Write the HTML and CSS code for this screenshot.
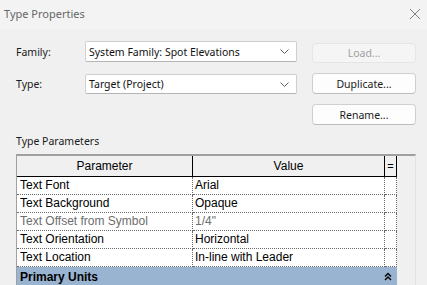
FILE: index.html
```html
<!DOCTYPE html>
<html>
<head>
<meta charset="utf-8">
<link rel="stylesheet" href="styles.css">
</head>
<body>
<div class="titlebar">
  <span class="title">Type Properties</span>
  <svg class="close" width="12" height="12" viewBox="0 0 12 12"><path d="M1 1L11 11M11 1L1 11" stroke="#808080" stroke-width="1" fill="none"/></svg>
</div>
<div class="content">
  <div class="form">
    <label class="lbl">Family:</label>
    <div class="combo c1"><span>System Family: Spot Elevations</span><svg width="9" height="5" viewBox="0 0 9 5"><path d="M0.5 0.5L4.5 4.5L8.5 0.5" stroke="#606060" fill="none"/></svg></div>
    <button class="btn disabled b1">Load...</button>
    <label class="lbl">Type:</label>
    <div class="combo c2"><span>Target (Project)</span><svg width="9" height="5" viewBox="0 0 9 5"><path d="M0.5 0.5L4.5 4.5L8.5 0.5" stroke="#606060" fill="none"/></svg></div>
    <button class="btn">Duplicate...</button>
    <span></span><span></span>
    <button class="btn">Rename...</button>
  </div>
  <div class="section">Type Parameters</div>
  <div class="frame">
    <div class="ptable">
      <div class="hc">Parameter</div><div class="hc">Value</div><div class="hc eq">=</div>
      <div class="bc">Text Font</div><div class="bc v">Arial</div><div class="bc"></div>
      <div class="bc">Text Background</div><div class="bc v">Opaque</div><div class="bc"></div>
      <div class="bc dis">Text Offset from Symbol</div><div class="bc v dis">1/4"</div><div class="bc"></div>
      <div class="bc">Text Orientation</div><div class="bc v">Horizontal</div><div class="bc"></div>
      <div class="bc">Text Location</div><div class="bc v">In-line with Leader</div><div class="bc"></div>
      <div class="group"><span>Primary Units</span><svg width="8" height="9" viewBox="0 0 8 9"><path d="M1 4.5L4 1.5L7 4.5M1 8L4 5L7 8" stroke="#000" stroke-width="1.4" fill="none"/></svg></div>
    </div>
    <div class="track"></div>
  </div>
</div>
</body>
</html>
```
FILE: styles.css
```css
html, body {
  margin: 0;
  padding: 0;
}
body {
  width: 427px;
  height: 285px;
  overflow: hidden;
  background: #f0f0f0;
  font-family: "Noto Sans", "Open Sans", sans-serif;
  font-size: 10.5px;
  color: #1b1b1b;
}
.titlebar {
  height: 29px;
  background: #f3f3f3;
  display: flex;
  align-items: center;
  justify-content: space-between;
  padding: 0 6px 2px 4px;
  box-sizing: border-box;
}
.title {
  color: #666;
  font-size: 11px;
}
.close {
  display: block;
}
.content {
  padding: 12px 11px 0 16px;
}
.form {
  display: grid;
  grid-template-columns: 69px 212px 119px;
  grid-template-rows: 22px 21px 21px;
  row-gap: 10px;
  align-items: center;
}
.lbl {
  align-self: center;
}
.combo {
  height: 21px;
  box-sizing: border-box;
  background: #fff;
  border: 1px solid #cfcfcf;
  border-bottom-color: #b5b5b5;
  border-radius: 2px;
  display: flex;
  align-items: center;
  justify-content: space-between;
  padding: 0 7px 0 3px;
  color: #111;
}
.combo svg { display: block; }
.c1 { align-self: start; }
.c2 { align-self: end; height: 20px; }
.btn {
  justify-self: end;
  width: 104px;
  height: 21px;
  box-sizing: border-box;
  background: #fdfdfd;
  border: 1px solid #d0d0d0;
  border-bottom-color: #bdbdbd;
  border-radius: 4px;
  font-family: "Noto Sans", "Open Sans", sans-serif;
  font-size: 10.5px;
  color: #1b1b1b;
  padding: 0;
}
.btn.disabled {
  background: #f5f5f5;
  border-color: #e5e5e5;
  color: #a0a0a0;
}
.b1 { align-self: end; height: 20px; }
.section {
  margin-top: 9px;
  line-height: 14px;
  height: 14px;
}
.frame {
  margin-top: 6px;
  width: 400px;
  height: 131px;
  box-sizing: border-box;
  border-top: 2px solid #a0a0a0;
  border-left: 1px solid #a0a0a0;
  border-right: 1px solid #e3e3e3;
  display: flex;
  overflow: hidden;
  background: #f0f0f0;
}
.ptable {
  width: 380px;
  display: grid;
  grid-template-columns: 176px 192px 12px;
  grid-auto-rows: 18px;
  grid-template-rows: 21px;
  font-family: "Liberation Sans", Arial, sans-serif;
  font-size: 12px;
  color: #000;
  align-content: start;
}
.hc {
  background: #f0f0f0;
  border-right: 1px solid #000;
  border-bottom: 1px solid #000;
  box-sizing: border-box;
  display: flex;
  align-items: center;
  justify-content: center;
  padding-bottom: 1px;
}
.hc.eq {
  font-size: 11px;
}
.bc {
  background: #fff;
  border-right: 1px dotted #6a6a6a;
  border-bottom: 1px dotted #6a6a6a;
  box-sizing: border-box;
  padding-left: 3px;
  line-height: 17px;
  white-space: nowrap;
  overflow: hidden;
}
.bc.v { padding-left: 2px; }
.bc.dis { color: #6d6d6d; }
.group {
  grid-column: 1 / 4;
  background: #99b4d1;
  display: flex;
  align-items: center;
  justify-content: space-between;
  padding: 0 5px 0 3px;
  font-weight: bold;
  height: 19px;
}
.group svg { display: block; }
.track {
  flex: 1;
  background: #f0f0f0;
}
```
